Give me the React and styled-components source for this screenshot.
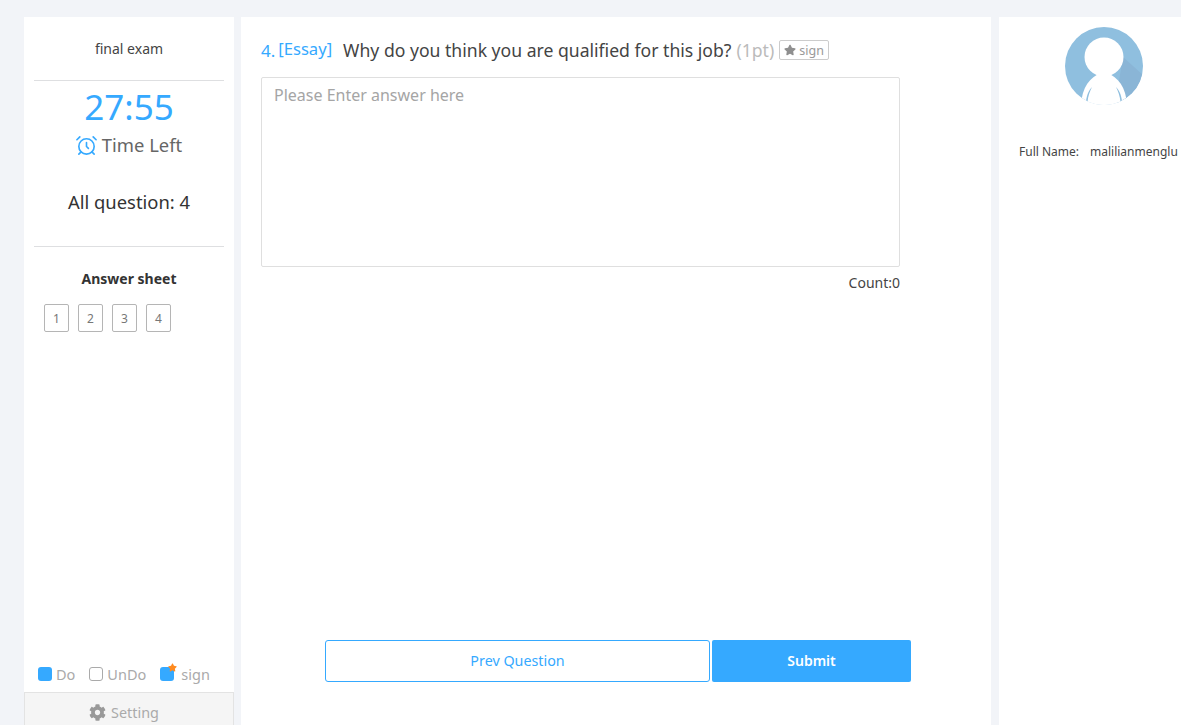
import styled, { createGlobalStyle } from "styled-components";
import { AlarmClock } from "lucide-react";
import { FaStar, FaCog } from "react-icons/fa";

const FONT = `"Noto Sans", "Open Sans", "Noto Sans CJK SC", sans-serif`;
const BLUE = "#35a9ff";

const GlobalStyle = createGlobalStyle`
	html, body {
		margin: 0;
		height: 100%;
		overflow: hidden;
		background: #f2f4f8;
		font-family: ${FONT};
	}
	* {
		box-sizing: border-box;
	}
`;

export default function App() {
	return (
		<>
			<GlobalStyle />
			<Page>
				<Sidebar>
					<ExamName>final exam</ExamName>
					<Divider />
					<Timer>27:55</Timer>
					<TimeLeft>
						<AlarmClock size={23} color={BLUE} strokeWidth={1.7} />
						Time Left
					</TimeLeft>
					<AllQuestion>All question: 4</AllQuestion>
					<Divider />
					<SheetTitle>Answer sheet</SheetTitle>
					<SheetGrid>
						{[1, 2, 3, 4].map((n) => (
							<SheetCell key={n}>{n}</SheetCell>
						))}
					</SheetGrid>
					<Legend>
						<LegendItem>
							<Swatch $filled />
							Do
						</LegendItem>
						<LegendItem>
							<Swatch />
							UnDo
						</LegendItem>
						<LegendItem>
							<Swatch $filled>
								<SwatchStar>
									<FaStar size={9} color="#ff8a1f" />
								</SwatchStar>
							</Swatch>
							<SignLabel>sign</SignLabel>
						</LegendItem>
					</Legend>
					<Setting>
						<FaCog size={17} color="#999" />
						Setting
					</Setting>
				</Sidebar>

				<Main>
					<QuestionRow>
						<QuestionNo>4.</QuestionNo>
						<QuestionType>[Essay]</QuestionType>
						<QuestionText>Why do you think you are qualified for this job?</QuestionText>
						<Points>(1pt)</Points>
						<SignButton>
							<FaStar size={12} color="#8f8f8f" />
							sign
						</SignButton>
					</QuestionRow>
					<Answer placeholder="Please Enter answer here" />
					<Count>Count:0</Count>
					<Actions>
						<PrevButton>Prev Question</PrevButton>
						<SubmitButton>Submit</SubmitButton>
					</Actions>
				</Main>

				<Profile>
					<Avatar width="78" height="78" viewBox="0 0 78 78">
						<defs>
							<clipPath id="avatarClip">
								<circle cx="39" cy="39" r="39" />
							</clipPath>
						</defs>
						<g clipPath="url(#avatarClip)">
							<rect width="78" height="78" fill="#8fbfdf" />
							<path d="M58 30 L78 48 L78 78 L50 78 Z" fill="#8ab5d6" />
							<circle cx="39" cy="30" r="19.5" fill="#fff" />
							<path d="M16 78 C17 60 25 50 36 46 L42 46 C53 50 61 60 62 78 Z" fill="#fff" />
							<path d="M21 74 C22 67 24 63 27 60 C25 64 23 69 22.5 75 Z" fill="#8fbfdf" />
							<path d="M57 74 C56 67 54 63 51 60 C53 64 55 69 55.5 75 Z" fill="#8fbfdf" />
							<rect y="74" width="78" height="4" fill="#fff" />
						</g>
					</Avatar>
					<NameRow>
						<span>Full Name:</span>
						<span>malilianmenglu</span>
					</NameRow>
				</Profile>
			</Page>
		</>
	);
}

const Page = styled.div`
	display: flex;
	align-items: stretch;
	width: 1181px;
	height: 725px;
	padding: 17px 0 0 24px;
	overflow: hidden;
`;

const Sidebar = styled.aside`
	flex: 0 0 210px;
	display: flex;
	flex-direction: column;
	background: #fff;
`;

const ExamName = styled.div`
	height: 63px;
	padding-top: 22px;
	text-align: center;
	font-size: 14px;
	line-height: 20px;
	color: #444;
`;

const Divider = styled.div`
	height: 1px;
	margin: 0 10px;
	background: #dedfe1;
`;

const Timer = styled.div`
	margin-top: 4px;
	text-align: center;
	font-size: 35px;
	line-height: 44px;
	color: ${BLUE};
`;

const TimeLeft = styled.div`
	display: flex;
	justify-content: center;
	align-items: center;
	gap: 4px;
	margin-top: 3px;
	padding-right: 1px;
	font-size: 18.4px;
	line-height: 26px;
	color: #666;
`;

const AllQuestion = styled.div`
	margin-top: 31px;
	height: 57px;
	text-align: center;
	font-size: 18.4px;
	line-height: 26px;
	color: #333;
`;

const SheetTitle = styled.div`
	margin-top: 22px;
	text-align: center;
	font-size: 14px;
	line-height: 20px;
	font-weight: 700;
	color: #333;
`;

const SheetGrid = styled.div`
	display: flex;
	gap: 9px;
	margin-top: 15px;
	padding-left: 20px;
`;

const SheetCell = styled.div`
	display: flex;
	align-items: center;
	justify-content: center;
	width: 25px;
	height: 28px;
	border: 1px solid #b5b5b5;
	border-radius: 2px;
	font-size: 12px;
	color: #777;
`;

const Legend = styled.div`
	display: flex;
	align-items: center;
	gap: 14px;
	margin-top: auto;
	height: 36px;
	padding-left: 14px;
	font-size: 14.5px;
	color: #aaa;
`;

const LegendItem = styled.div`
	display: flex;
	align-items: center;
	gap: 4px;
`;

const Swatch = styled.span`
	position: relative;
	display: block;
	width: 14px;
	height: 14px;
	border-radius: 3px;
	background: ${(p) => (p.$filled ? BLUE : "#fff")};
	border: ${(p) => (p.$filled ? "none" : "1.5px solid #aaa")};
`;

const SwatchStar = styled.span`
	position: absolute;
	top: -4px;
	right: -3px;
	line-height: 0;
`;

const SignLabel = styled.span`
	margin-left: 3px;
`;

const Setting = styled.div`
	display: flex;
	align-items: center;
	justify-content: center;
	gap: 5px;
	height: 33px;
	padding: 6px 10px 0 0;
	background: #f5f5f5;
	border: 1px solid #e3e3e3;
	border-bottom: none;
	font-size: 14.4px;
	color: #aaa;
`;

const Main = styled.main`
	flex: 0 0 750px;
	display: flex;
	flex-direction: column;
	margin: 0 8px 0 7px;
	padding: 20px 20px 43px;
	background: #fff;
`;

const QuestionRow = styled.div`
	display: flex;
	align-items: center;
	height: 26px;
	margin-bottom: 14px;
	white-space: nowrap;
`;

const QuestionNo = styled.span`
	font-size: 17px;
	color: ${BLUE};
	margin-right: 3px;
`;

const QuestionType = styled.span`
	position: relative;
	top: -2px;
	font-size: 16.6px;
	color: ${BLUE};
	margin-right: 11px;
`;

const QuestionText = styled.span`
	font-size: 17.6px;
	color: #444;
`;

const Points = styled.span`
	margin-left: 5px;
	font-size: 17.6px;
	color: #bbb;
`;

const SignButton = styled.span`
	display: flex;
	align-items: center;
	gap: 3px;
	height: 20px;
	margin-left: 5px;
	padding: 0 4px;
	border: 1px solid #ccc;
	border-radius: 2px;
	font-size: 12.5px;
	color: #999;
`;

const Answer = styled.textarea`
	display: block;
	width: 639px;
	height: 190px;
	padding: 4px 12px;
	border: 1px solid #dfdfdf;
	border-radius: 2px;
	outline: none;
	resize: none;
	font-family: ${FONT};
	font-size: 16px;
	line-height: 26px;
	color: #333;
	&::placeholder {
		color: #a5a5a5;
		opacity: 1;
	}
`;

const Count = styled.div`
	width: 639px;
	margin-top: 6px;
	text-align: right;
	font-size: 14px;
	line-height: 20px;
	color: #444;
`;

const Actions = styled.div`
	display: flex;
	gap: 2px;
	margin-top: auto;
	padding-left: 64px;
`;

const PrevButton = styled.button`
	width: 385px;
	height: 42px;
	padding-bottom: 3px;
	background: #fff;
	border: 1px solid ${BLUE};
	border-radius: 3px;
	font-family: ${FONT};
	font-size: 14.3px;
	color: ${BLUE};
`;

const SubmitButton = styled.button`
	width: 199px;
	height: 42px;
	padding-bottom: 3px;
	background: ${BLUE};
	border: none;
	border-radius: 2px;
	font-family: ${FONT};
	font-size: 14px;
	font-weight: 600;
	color: #fff;
`;

const Profile = styled.aside`
	flex: 0 0 210px;
	display: flex;
	flex-direction: column;
	padding-top: 10px;
	background: #fff;
`;

const Avatar = styled.svg`
	display: block;
	margin-left: 66px;
`;

const NameRow = styled.div`
	display: flex;
	gap: 11px;
	margin-top: 38px;
	padding-left: 20px;
	font-size: 12px;
	line-height: 18px;
	color: #444;
	white-space: nowrap;
`;
